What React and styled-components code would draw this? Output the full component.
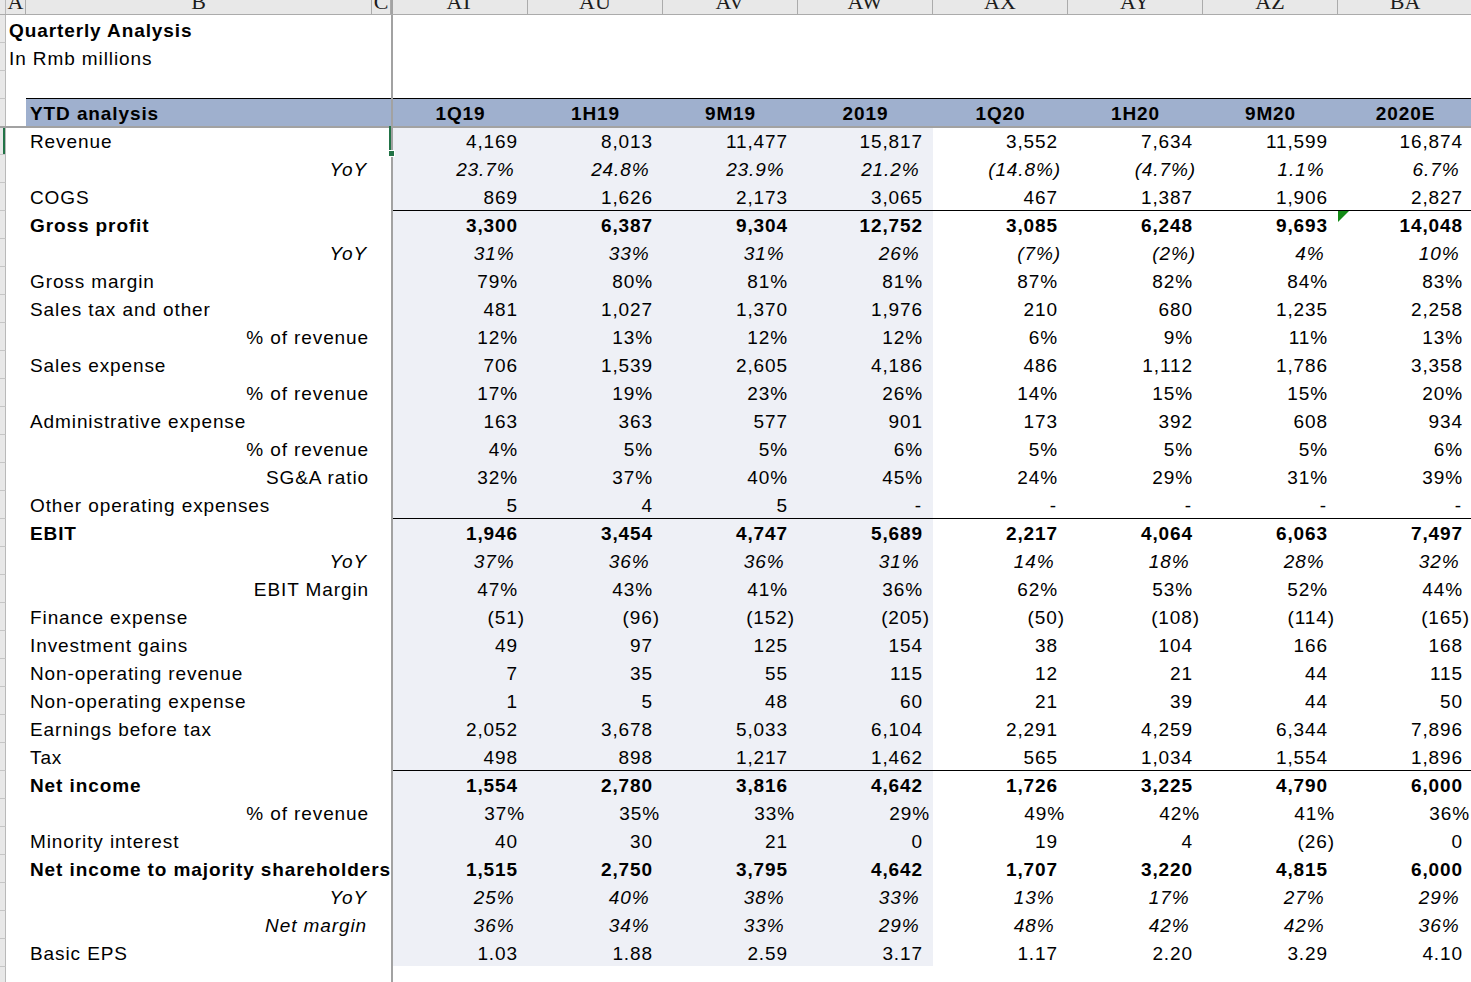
import React from 'react';
import styled, { createGlobalStyle, css } from 'styled-components';

const Global = createGlobalStyle`
  html, body { margin: 0; padding: 0; background: #fff; }
  body { overflow: hidden; }
`;

const GRID = '6px 20px 346px 19px 2px repeat(8, 135px)';

const C = {
  head: '#e8e8e8',
  headLine: '#ababab',
  stubLine: '#c6c6c6',
  freeze: '#a2a2a2',
  band: '#9fb0ce',
  shade: '#eef0f6',
  green: '#217346',
  flag: '#138a16',
};

const Sheet = styled.div`
  width: 1471px;
  height: 982px;
  overflow: hidden;
  background: #fff;
  font-family: "Liberation Sans", Arial, sans-serif;
  font-size: 19px;
  letter-spacing: 0.9px;
  color: #000;
`;

const Row = styled.div`
  display: grid;
  grid-template-columns: ${GRID};
  grid-template-rows: minmax(0, 1fr);
  height: ${p => p.$h ?? 28}px;
  box-sizing: border-box;
  ${p => p.$freeze && css`border-top: 2px solid ${C.freeze};`}
  ${p => p.$head && css`background: ${C.head}; border-bottom: 1px solid ${C.headLine};`}
  & > * { grid-row: 1; }
`;

const Stub = styled.div`
  grid-column: 1;
  background: ${C.head};
  border-right: 1px solid #b9b9b9;
  box-sizing: border-box;
  ${p => !p.$noTop && css`border-top: 1px solid ${C.stubLine};`}
  ${p => p.$active && css`box-shadow: inset -2px 0 0 ${C.green};`}
`;

const Freeze = styled.div`
  grid-column: 5;
  background: ${C.freeze};
`;

const ColHead = styled.div`
  grid-column: ${p => p.$col};
  height: 14px;
  overflow: hidden;
  text-align: center;
  font-family: "Liberation Serif", "Times New Roman", serif;
  font-size: 22px;
  line-height: 3px;
  letter-spacing: 0;
  color: #1c1c1c;
  box-sizing: border-box;
  border-right: 1px solid ${C.headLine};
`;

const textCell = css`
  display: flex;
  align-items: flex-end;
  box-sizing: border-box;
  padding-bottom: 1px;
  line-height: 22px;
  white-space: nowrap;
  min-width: 0;
`;

const Title = styled.div`
  ${textCell};
  grid-column: 2 / 5;
  padding-left: 3px;
  padding-bottom: 0;
  font-weight: ${p => (p.$bold ? 700 : 400)};
`;

const BandLabel = styled.div`
  ${textCell};
  grid-column: 3 / 5;
  padding-left: 4px;
  background: ${C.band};
  border-top: 1px solid #000;
  font-weight: 700;
`;

const BandHead = styled.div`
  ${textCell};
  grid-column: ${p => p.$col};
  justify-content: center;
  background: ${C.band};
  border-top: 1px solid #000;
  font-weight: 700;
`;

const Label = styled.div`
  ${textCell};
  grid-column: ${p => (p.$indent ? '3 / 4' : '3 / 5')};
  justify-content: ${p => (p.$indent ? 'flex-end' : 'flex-start')};
  padding-left: 4px;
  padding-right: ${p => (p.$italic ? 5 : 3)}px;
  font-weight: ${p => (p.$bold ? 700 : 400)};
  font-style: ${p => (p.$italic ? 'italic' : 'normal')};
`;

const Val = styled.div`
  ${textCell};
  grid-column: ${p => p.$col};
  position: relative;
  justify-content: flex-end;
  padding-right: ${p => p.$pr}px;
  background: ${p => (p.$shade ? C.shade : 'transparent')};
  font-weight: ${p => (p.$bold ? 700 : 400)};
  font-style: ${p => (p.$italic ? 'italic' : 'normal')};
  ${p => p.$rule && css`border-top: 1px solid #000;`}
  ${p =>
    p.$flag &&
    css`
      &::before {
        content: '';
        position: absolute;
        left: 0;
        top: 0;
        border-top: 11px solid ${C.flag};
        border-right: 11px solid transparent;
      }
    `}
`;

const Selection = styled.div`
  grid-column: 4;
  position: relative;
  z-index: 2;
  pointer-events: none;
  &::before {
    content: '';
    position: absolute;
    right: 0;
    top: -2px;
    bottom: 0;
    width: 2px;
    background: ${C.green};
  }
  &::after {
    content: '';
    position: absolute;
    right: -4px;
    bottom: -3px;
    width: 7px;
    height: 7px;
    box-sizing: border-box;
    background: ${C.green};
    border: 1px solid #fff;
  }
`;

const LETTERS = ['AT', 'AU', 'AV', 'AW', 'AX', 'AY', 'AZ', 'BA'];
const PERIODS = ['1Q19', '1H19', '9M19', '2019', '1Q20', '1H20', '9M20', '2020E'];

const ROWS = [
  { label: 'Revenue', freeze: true, active: true, v: ['4,169', '8,013', '11,477', '15,817', '3,552', '7,634', '11,599', '16,874'] },
  { label: 'YoY', indent: true, italic: true, v: ['23.7%', '24.8%', '23.9%', '21.2%', '(14.8%)', '(4.7%)', '1.1%', '6.7%'] },
  { label: 'COGS', v: ['869', '1,626', '2,173', '3,065', '467', '1,387', '1,906', '2,827'] },
  { label: 'Gross profit', bold: true, rule: true, flag: 7, v: ['3,300', '6,387', '9,304', '12,752', '3,085', '6,248', '9,693', '14,048'] },
  { label: 'YoY', indent: true, italic: true, v: ['31%', '33%', '31%', '26%', '(7%)', '(2%)', '4%', '10%'] },
  { label: 'Gross margin', v: ['79%', '80%', '81%', '81%', '87%', '82%', '84%', '83%'] },
  { label: 'Sales tax and other', v: ['481', '1,027', '1,370', '1,976', '210', '680', '1,235', '2,258'] },
  { label: '% of revenue', indent: true, v: ['12%', '13%', '12%', '12%', '6%', '9%', '11%', '13%'] },
  { label: 'Sales expense', v: ['706', '1,539', '2,605', '4,186', '486', '1,112', '1,786', '3,358'] },
  { label: '% of revenue', indent: true, v: ['17%', '19%', '23%', '26%', '14%', '15%', '15%', '20%'] },
  { label: 'Administrative expense', v: ['163', '363', '577', '901', '173', '392', '608', '934'] },
  { label: '% of revenue', indent: true, v: ['4%', '5%', '5%', '6%', '5%', '5%', '5%', '6%'] },
  { label: 'SG&A ratio', indent: true, v: ['32%', '37%', '40%', '45%', '24%', '29%', '31%', '39%'] },
  { label: 'Other operating expenses', v: ['5', '4', '5', '-', '-', '-', '-', '-'] },
  { label: 'EBIT', bold: true, rule: true, v: ['1,946', '3,454', '4,747', '5,689', '2,217', '4,064', '6,063', '7,497'] },
  { label: 'YoY', indent: true, italic: true, v: ['37%', '36%', '36%', '31%', '14%', '18%', '28%', '32%'] },
  { label: 'EBIT Margin', indent: true, v: ['47%', '43%', '41%', '36%', '62%', '53%', '52%', '44%'] },
  { label: 'Finance expense', v: ['(51)', '(96)', '(152)', '(205)', '(50)', '(108)', '(114)', '(165)'] },
  { label: 'Investment gains', v: ['49', '97', '125', '154', '38', '104', '166', '168'] },
  { label: 'Non-operating revenue', v: ['7', '35', '55', '115', '12', '21', '44', '115'] },
  { label: 'Non-operating expense', v: ['1', '5', '48', '60', '21', '39', '44', '50'] },
  { label: 'Earnings before tax', v: ['2,052', '3,678', '5,033', '6,104', '2,291', '4,259', '6,344', '7,896'] },
  { label: 'Tax', v: ['498', '898', '1,217', '1,462', '565', '1,034', '1,554', '1,896'] },
  { label: 'Net income', bold: true, rule: true, v: ['1,554', '2,780', '3,816', '4,642', '1,726', '3,225', '4,790', '6,000'] },
  { label: '% of revenue', indent: true, tight: true, v: ['37%', '35%', '33%', '29%', '49%', '42%', '41%', '36%'] },
  { label: 'Minority interest', v: ['40', '30', '21', '0', '19', '4', '(26)', '0'] },
  { label: 'Net income to majority shareholders', bold: true, v: ['1,515', '2,750', '3,795', '4,642', '1,707', '3,220', '4,815', '6,000'] },
  { label: 'YoY', indent: true, italic: true, v: ['25%', '40%', '38%', '33%', '13%', '17%', '27%', '29%'] },
  { label: 'Net margin', indent: true, italic: true, v: ['36%', '34%', '33%', '29%', '48%', '42%', '42%', '36%'] },
  { label: 'Basic EPS', v: ['1.03', '1.88', '2.59', '3.17', '1.17', '2.20', '3.29', '4.10'] },
];

function rightPad(v, italic, tight) {
  if (v === '-') return 11;
  const neg = v.startsWith('(');
  if (tight) return 3;
  if (italic) return neg ? 7 : 13.5;
  return neg ? 3 : 10;
}

function DataRow({ row }) {
  return (
    <Row $freeze={row.freeze}>
      <Stub $noTop={row.freeze} $active={row.active} />
      <Label $indent={row.indent} $bold={row.bold} $italic={row.italic}>
        {row.label}
      </Label>
      {row.active && <Selection />}
      <Freeze />
      {row.v.map((v, i) => (
        <Val
          key={i}
          $col={6 + i}
          $shade={i < 4}
          $bold={row.bold}
          $italic={row.italic}
          $rule={row.rule}
          $flag={row.flag === i}
          $pr={rightPad(v, row.italic, row.tight)}
        >
          {v}
        </Val>
      ))}
    </Row>
  );
}

export default function App() {
  return (
    <>
      <Global />
      <Sheet>
        <Row $h={15} $head>
          <Stub $noTop />
          <ColHead $col={2}>A</ColHead>
          <ColHead $col={3}>B</ColHead>
          <ColHead $col={4}>C</ColHead>
          <Freeze />
          {LETTERS.map((l, i) => (
            <ColHead key={l} $col={6 + i}>
              {l}
            </ColHead>
          ))}
        </Row>

        <Row $h={27}>
          <Stub $noTop />
          <Title $bold>Quarterly Analysis</Title>
          <Freeze />
        </Row>
        <Row>
          <Stub />
          <Title>In Rmb millions</Title>
          <Freeze />
        </Row>
        <Row>
          <Stub />
          <Freeze />
        </Row>

        <Row>
          <Stub />
          <BandLabel>YTD analysis</BandLabel>
          <Freeze />
          {PERIODS.map((p, i) => (
            <BandHead key={p} $col={6 + i}>
              {p}
            </BandHead>
          ))}
        </Row>

        {ROWS.map((r, i) => (
          <DataRow key={i} row={r} />
        ))}

        <Row>
          <Stub />
          <Freeze />
        </Row>
      </Sheet>
    </>
  );
}
